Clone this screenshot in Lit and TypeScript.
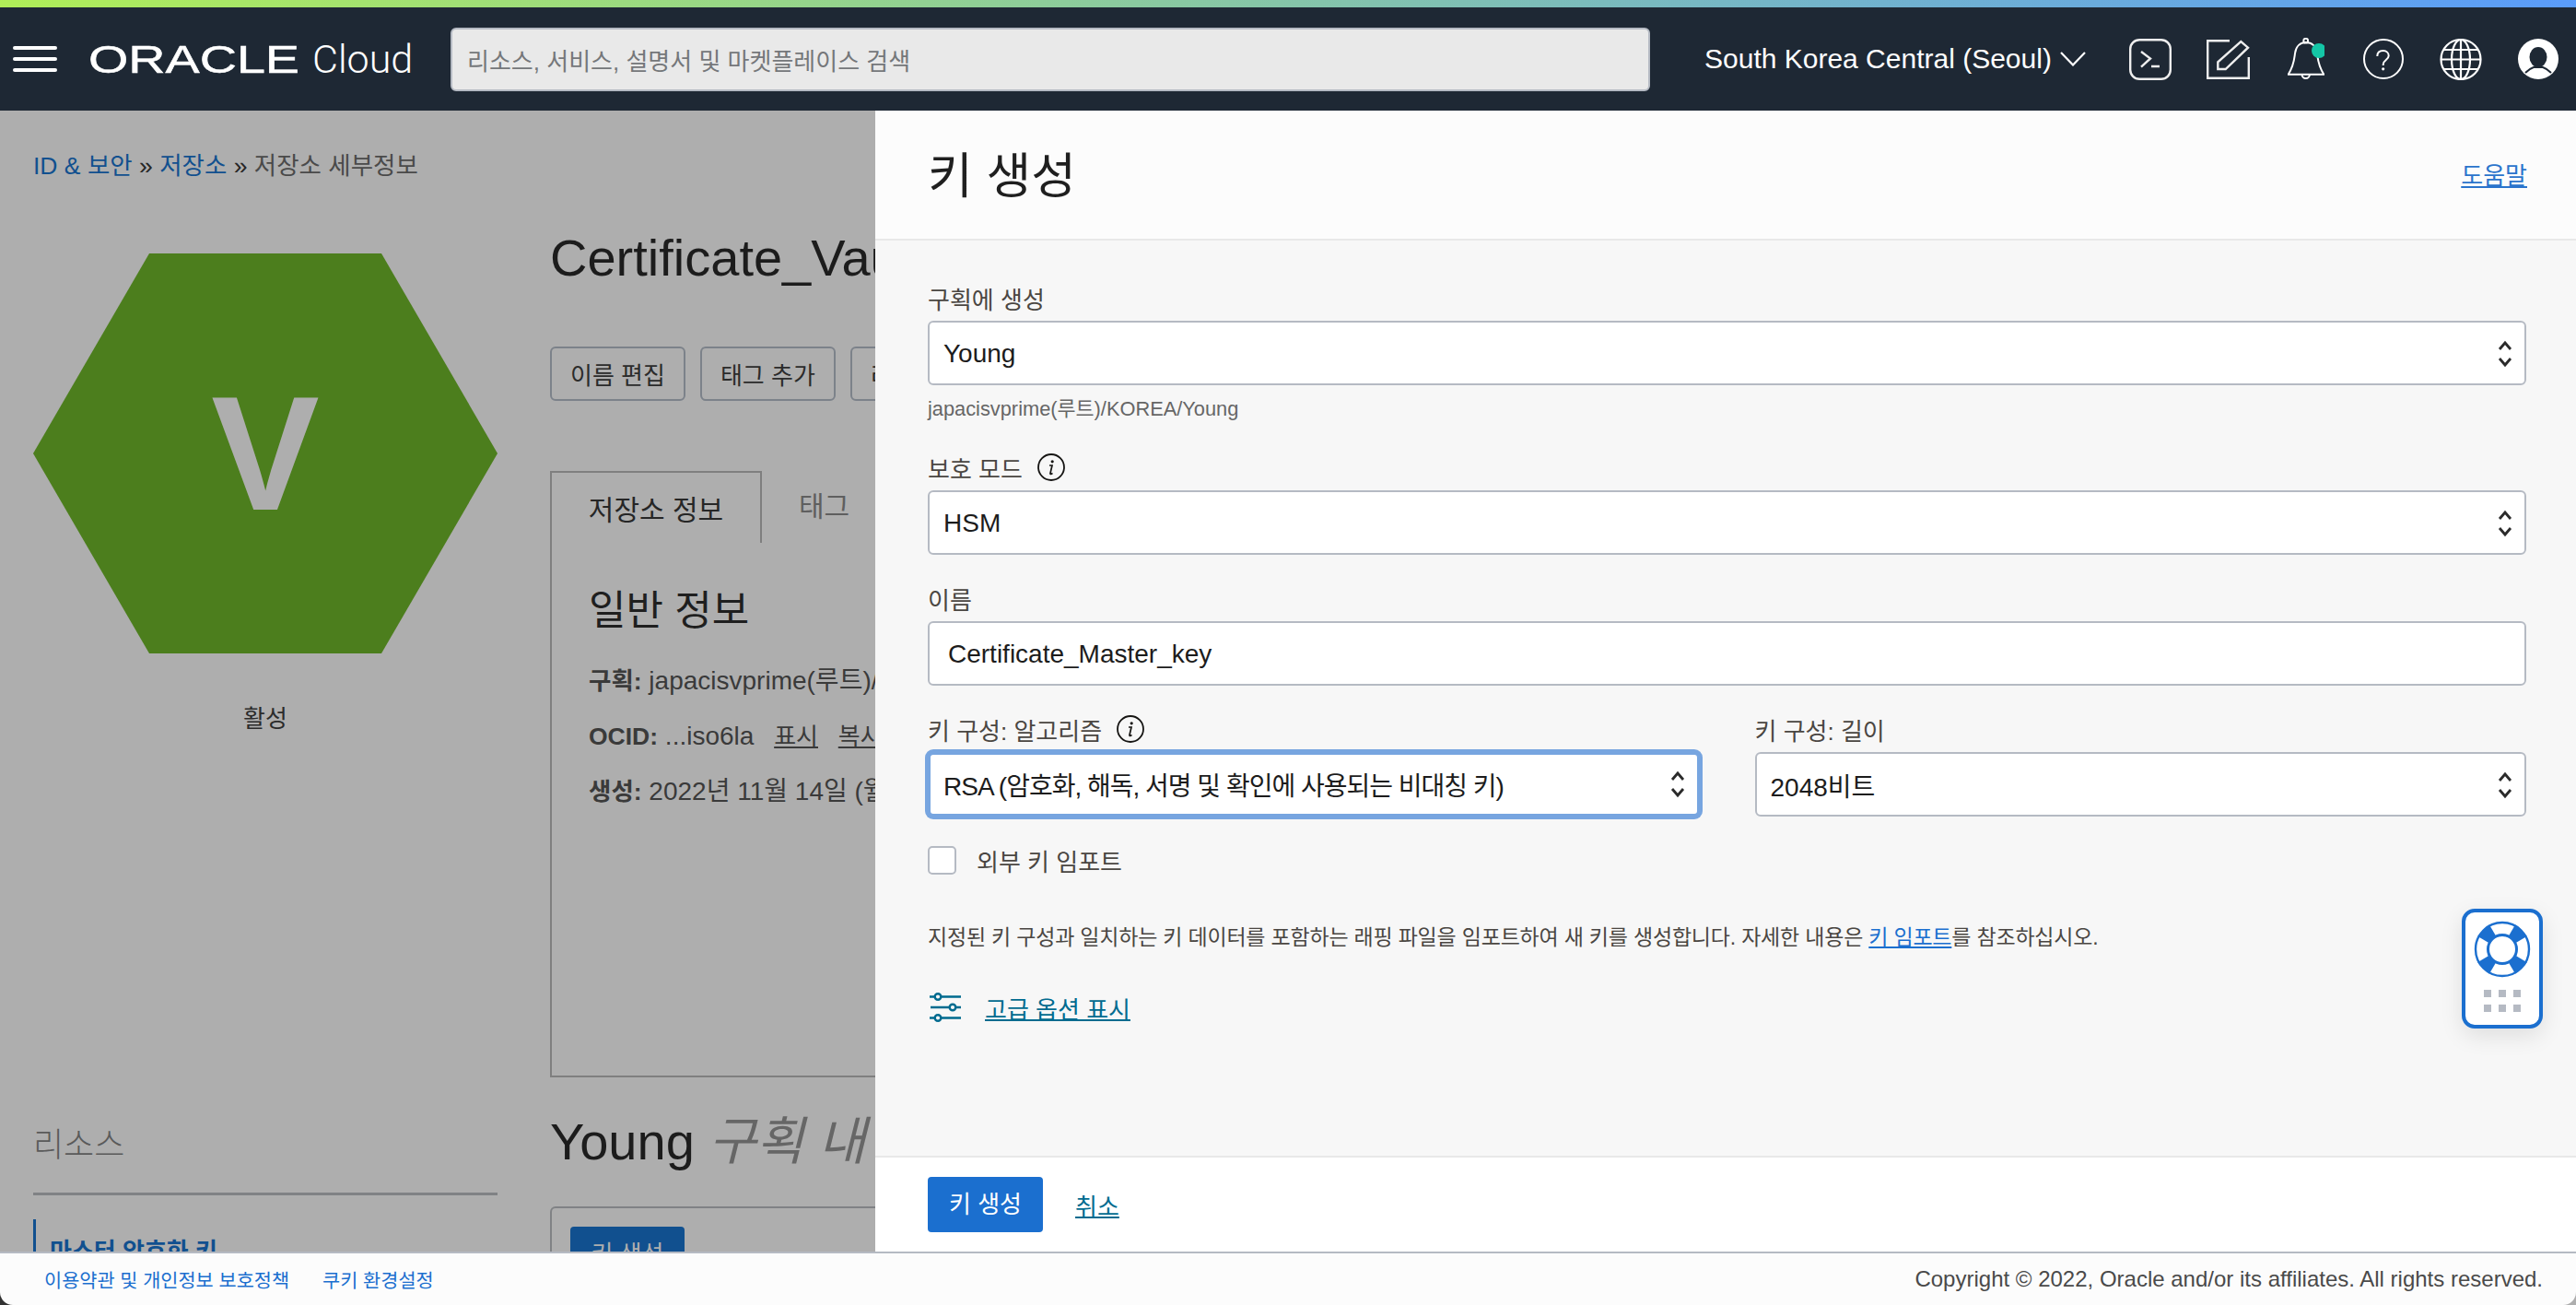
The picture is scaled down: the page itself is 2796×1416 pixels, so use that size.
import {LitElement, css, html, svg} from "lit";
import {customElement} from "lit/decorators.js";

const chevrons = html`<svg class="chev" width="16" height="34" viewBox="0 0 16 34">
  <path d="M2 12 8 5l6 7M2 22l6 7 6-7" fill="none" stroke="#2b2b2b" stroke-width="2.800"/>
</svg>`;

const info = html`<svg class="info" width="30" height="30" viewBox="0 0 30 30">
  <circle cx="15" cy="15" r="14" fill="none" stroke="#161513" stroke-width="1.8"/>
  <circle cx="16.2" cy="8.8" r="1.6" fill="#161513"/>
  <path d="M13 13h3l-2 8.5q-.2 1 .8 1l1.7-1" fill="none" stroke="#161513" stroke-width="1.7"/>
</svg>`;

const buoyWedges = [45, 135, 225, 315].map(
  (a) => svg`<polygon points="-5,-14 5,-14 9,-29 -9,-29" fill="#1b6fcf" transform="rotate(${a})"/>`
);

@customElement("app-root")
export class AppRoot extends LitElement {
  static override styles = css`
    :host {
      display: block;
      width: 2796px;
      height: 1416px;
      overflow: hidden;
      position: relative;
      background: linear-gradient(90deg, #333 20px, #aeaeae 20px);
      font-family: "Liberation Sans", "Noto Sans CJK KR", sans-serif;
      font-size: 26px;
      color: #2b2b2b;
    }
    .rainbow {
      height: 8px;
      background: linear-gradient(90deg, #b0ee58, #5a9cfa);
    }
    .topbar {
      height: 112px;
      background: #1e2834;
      display: flex;
      align-items: center;
      color: #fff;
    }
    .burger {
      margin-left: 14px;
      width: 48px;
      display: flex;
      flex-direction: column;
      gap: 8px;
    }
    .burger i {
      display: block;
      height: 4px;
      border-radius: 2px;
      background: #fff;
    }
    .logo {
      margin-left: 34px;
      width: 229px;
      height: 44px;
      display: block;
      overflow: visible;
    }
    .cloud {
      margin-left: 14px;
      font-family: Roboto, "Liberation Sans", sans-serif;
      font-size: 43px;
      font-weight: 300;
      width: 110px;
    }
    .search {
      margin-left: 40px;
      width: 1302px;
      height: 69px;
      box-sizing: border-box;
      display: flex;
      align-items: center;
      padding-left: 16px;
      background: #e9e9e9;
      border: 2px solid #b5bac3;
      border-radius: 6px;
      color: #75777a;
    }
    .region {
      margin-left: 59px;
      font-size: 30px;
      white-space: nowrap;
    }
    .region-caret {
      margin-left: 9px;
    }
    .tools {
      margin-left: 47px;
      display: flex;
      align-items: center;
      gap: 38px;
    }
    .tools svg {
      display: block;
    }
    .tools .bell {
      margin: 0 4px 0 3px;
    }
    .tools .globe,
    .tools .avatar {
      margin-left: 1px;
    }
    .page {
      height: 1238px;
      display: flex;
      overflow: hidden;
      background: #aeaeae;
    }
    .side {
      width: 504px;
      margin-left: 36px;
      flex: none;
    }
    .crumbs {
      margin-top: 45px;
      height: 30px;
      line-height: 30px;
      font-size: 26.5px;
      white-space: nowrap;
      color: #4a4a4a;
    }
    .crumbs a {
      color: #11508f;
    }
    .crumbs b {
      color: #262626;
      font-weight: 400;
    }
    .hex {
      margin-top: 80px;
      height: 434px;
      background: #4c7e1d;
      clip-path: polygon(25% 0, 75% 0, 100% 50%, 75% 100%, 25% 100%, 0 50%);
      display: flex;
      align-items: center;
      justify-content: center;
      color: #aeaeae;
      font-size: 176px;
      font-weight: 700;
    }
    .status {
      margin-top: 50px;
      text-align: center;
      color: #2b2b2b;
    }
    .res-head {
      margin-top: 425px;
      font-size: 36px;
      font-weight: 300;
      color: #5a5a5a;
      line-height: 44px;
    }
    .res-line {
      margin-top: 29px;
      height: 3px;
      background: #808285;
    }
    .res-item {
      margin-top: 26px;
      border-left: 3px solid #11508f;
      padding: 18px 0 0 15px;
      font-weight: 700;
      color: #11508f;
      white-space: nowrap;
      line-height: 34px;
      height: 60px;
    }
    .main {
      margin-left: 57px;
      flex: 1;
      min-width: 0;
    }
    h1 {
      margin: 0;
      font-size: 56px;
      font-weight: 400;
      line-height: 64px;
      white-space: nowrap;
      color: #1c1c1c;
    }
    .title {
      margin-top: 128px;
    }
    .actions {
      margin-top: 64px;
      display: flex;
      gap: 16px;
    }
    .actions span {
      box-sizing: border-box;
      height: 59px;
      padding: 0 20px;
      display: flex;
      align-items: center;
      white-space: nowrap;
      border: 2px solid #7c828a;
      border-radius: 6px;
    }
    .tabs {
      margin-top: 76px;
      height: 78px;
      display: flex;
      font-size: 30px;
    }
    .tab {
      box-sizing: border-box;
      width: 230px;
      border: 2px solid #7f7f7f;
      border-bottom: none;
      background: #aeaeae;
      position: relative;
      z-index: 1;
      display: flex;
      align-items: center;
      justify-content: center;
      color: #262626;
    }
    .tab.off {
      width: auto;
      border: none;
      padding: 0 40px;
      color: #5f5f5f;
      margin-top: -6px;
    }
    .panel {
      box-sizing: border-box;
      margin-top: -2px;
      height: 582px;
      border: 2px solid #7f7f7f;
      padding: 46px 0 0 40px;
      font-size: 28px;
      color: #3a3a3a;
      white-space: nowrap;
    }
    h2 {
      margin: 0 0 18px;
      font-size: 44px;
      font-weight: 400;
      line-height: 56px;
      color: #1f1f1f;
    }
    .row {
      height: 60px;
      line-height: 60px;
    }
    .row b {
      font-size: 26.5px;
    }
    .row u {
      margin-left: 14px;
      font-size: 26px;
    }
    .sub {
      margin-top: 38px;
    }
    .sub em {
      color: #666;
    }
    .box {
      box-sizing: border-box;
      margin-top: 38px;
      height: 60px;
      border: 2px solid #808285;
      border-bottom: none;
      border-radius: 6px 0 0 0;
      padding: 20px 0 0 20px;
    }
    .box span {
      display: block;
      width: 124px;
      height: 60px;
      text-align: center;
      line-height: 60px;
      border-radius: 4px;
      background: #11508f;
      color: #aeaeae;
    }
    .bottom {
      box-sizing: border-box;
      position: absolute;
      left: 0;
      right: 0;
      bottom: 0;
      height: 58px;
      display: flex;
      align-items: center;
      padding: 0 36px 0 48px;
      background: #fcfcfc;
      border-top: 2px solid #b5bac3;
      border-radius: 0 0 14px 14px;
      font-size: 20.8px;
      z-index: 3;
    }
    .bottom a {
      color: #1b6fcf;
      margin-right: 36px;
    }
    .bottom .copy {
      margin-left: auto;
      font-size: 24px;
      color: #4a4a4a;
    }
    .drawer {
      position: absolute;
      left: 950px;
      right: 0;
      top: 120px;
      height: 1238px;
      display: flex;
      flex-direction: column;
      background: #f7f7f7;
      z-index: 2;
    }
    .d-head {
      box-sizing: border-box;
      height: 141px;
      padding: 0 53px 2px 57px;
      display: flex;
      align-items: center;
      justify-content: space-between;
      background: #fcfcfc;
      border-bottom: 2px solid #e8e8e8;
    }
    .d-head h3 {
      margin: 0 0 4px;
      font-size: 53px;
      font-weight: 400;
      color: #1f1f1f;
    }
    .d-head a {
      color: #2a74cc;
      text-decoration: underline;
    }
    .d-body {
      flex: 1;
      padding: 47px 54px 0 57px;
    }
    .field {
      margin-bottom: 32px;
    }
    .label {
      height: 30px;
      margin-bottom: 10px;
      display: flex;
      align-items: center;
      gap: 16px;
      white-space: nowrap;
      color: #4a4642;
    }
    .control {
      box-sizing: border-box;
      height: 70px;
      display: flex;
      align-items: center;
      justify-content: space-between;
      padding: 2px 13px 0 15px;
      background: #fff;
      border: 2px solid #b5bac3;
      border-radius: 6px;
      font-size: 28px;
      color: #1c1c1c;
      white-space: nowrap;
    }
    .control.text {
      padding-left: 20px;
    }
    .control.focus {
      border: 3px solid #77a5e0;
      box-shadow: 0 0 0 3px #77a5e0;
      letter-spacing: -1px;
      padding: 0 13px 0 14px;
    }
    .hint {
      margin: 12px 0 34px;
      height: 28px;
      line-height: 28px;
      font-size: 21.8px;
      color: #666;
    }
    .hinted {
      margin-bottom: 0;
    }
    .split {
      display: grid;
      grid-template-columns: 1fr 1fr;
      gap: 60px;
    }
    .check {
      margin-top: 32px;
      height: 31px;
      display: flex;
      align-items: center;
      gap: 22px;
      color: #4a4642;
    }
    .check i {
      box-sizing: border-box;
      width: 31px;
      height: 31px;
      background: #fff;
      border: 2px solid #b5bac3;
      border-radius: 5px;
    }
    .desc {
      margin-top: 53px;
      height: 30px;
      line-height: 30px;
      font-size: 23px;
      letter-spacing: -0.2px;
      white-space: nowrap;
      color: #4a4642;
    }
    .desc a {
      color: #1b6fcf;
      text-decoration: underline;
    }
    .adv {
      margin: 45px 0 0 2px;
      height: 32px;
      display: flex;
      align-items: center;
      gap: 26px;
    }
    .adv a {
      color: #006b8f;
      text-decoration: underline;
      text-decoration-thickness: 2px;
    }
    .helper {
      position: absolute;
      left: 2672px;
      top: 986px;
      box-sizing: border-box;
      width: 88px;
      height: 130px;
      background: #fff;
      border: 4px solid #1b6fcf;
      border-radius: 14px;
      box-shadow: 0 8px 24px rgba(0, 0, 0, 0.1);
      z-index: 4;
    }
    .helper svg {
      display: block;
    }
    .d-foot {
      box-sizing: border-box;
      height: 104px;
      padding: 0 0 0 57px;
      display: flex;
      align-items: center;
      gap: 35px;
      background: #fff;
      border-top: 2px solid #e8e8e8;
    }
    .d-foot span {
      width: 125px;
      height: 60px;
      line-height: 60px;
      text-align: center;
      color: #fff;
      background: #1b6fcf;
      border-radius: 4px;
    }
    .d-foot a {
      color: #006b8f;
      text-decoration: underline;
      text-decoration-thickness: 2px;
    }
  `;

  private renderTools() {
    return html`<div class="tools">
      <svg width="46" height="45" viewBox="0 0 46 45" fill="none" stroke="#eee" stroke-width="2.4">
        <rect x="1.2" y="1.2" width="43.6" height="42.6" rx="10"/>
        <path d="M13 14l10 7.500-10 9.200M24 30h9"/>
      </svg>
      <svg width="47" height="43" viewBox="0 0 47 43" fill="none" stroke="#eee" stroke-width="2.4">
        <path d="M25 1.200H1.200v40.600h44.600V19"/>
        <path d="M12.300 32v-7.700L37.300 2 45 8.700 20.700 32z"/>
      </svg>
      <svg class="bell" width="40" height="46" viewBox="0 0 40 46" fill="none" stroke="#fff" stroke-width="2">
        <path d="M.7 39.700H39.300C33 30 33 24 32 17 31 9 26 5 20 5S9 9 8 17C7 24 7 30 .7 39.700z"/>
        <circle cx="19.700" cy="3.200" r="2.400"/>
        <path d="M15.500 39.700a4.200 4.200 0 0 0 8.400 0"/>
        <circle cx="34" cy="14" r="8" fill="#14c6a6" stroke="none"/>
      </svg>
      <svg width="44" height="44" viewBox="0 0 44 44" fill="none" stroke="#fff" stroke-width="2">
        <circle cx="22" cy="22" r="21"/>
        <path d="M15.300 19c0-4 2.800-6 6.400-6s6 2.400 6 5.600c0 4.500-6 4.500-6 9.400v1"/>
        <circle cx="21.700" cy="32.800" r="1.600" fill="#fff" stroke="none"/>
      </svg>
      <svg class="globe" width="46" height="45" viewBox="0 0 46 45" fill="none" stroke="#fff" stroke-width="2.200">
        <circle cx="23" cy="22.500" r="21.500"/>
        <ellipse cx="23" cy="22.500" rx="10" ry="21.500"/>
        <path d="M23 1v43M1.500 22.500h43M5 12h36M5 33h36"/>
      </svg>
      <svg class="avatar" width="44" height="44" viewBox="0 0 44 44">
        <circle cx="22" cy="22" r="22" fill="#fff"/>
        <ellipse cx="22" cy="20" rx="9.500" ry="11" fill="#1e2834"/>
        <path d="M8 37c3-3 6-5 9-6h10c3 1 6 3 9 6" fill="none" stroke="#1e2834" stroke-width="2"/>
      </svg>
    </div>`;
  }

  override render() {
    return html`
      <div class="rainbow"></div>
      <div class="topbar">
        <div class="burger"><i></i><i></i><i></i></div>
        <svg class="logo" viewBox="0 0 229 44">
          <text x="0" y="37" font-size="42" textLength="229" lengthAdjust="spacingAndGlyphs" fill="#fff" stroke="#fff" stroke-width="0.5">ORACLE</text>
        </svg>
        <div class="cloud">Cloud</div>
        <div class="search">리소스, 서비스, 설명서 및 마켓플레이스 검색</div>
        <div class="region">South Korea Central (Seoul)</div>
        <svg class="region-caret" width="28" height="16" viewBox="0 0 28 16">
          <path d="M1 1l13 13.500L27 1" fill="none" stroke="#fff" stroke-width="2.200"/>
        </svg>
        ${this.renderTools()}
      </div>
      <div class="page">
        <div class="side">
          <div class="crumbs"><a>ID &amp; 보안</a> <b>»</b> <a>저장소</a> <b>»</b> 저장소 세부정보</div>
          <div class="hex">V</div>
          <div class="status">활성</div>
          <div class="res-head">리소스</div>
          <div class="res-line"></div>
          <div class="res-item">마스터 암호화 키</div>
        </div>
        <div class="main">
          <h1 class="title">Certificate_Vault</h1>
          <div class="actions"><span>이름 편집</span><span>태그 추가</span><span>리소스 이동</span></div>
          <div class="tabs">
            <div class="tab">저장소 정보</div>
            <div class="tab off">태그</div>
          </div>
          <div class="panel">
            <h2>일반 정보</h2>
            <div class="row"><b>구획:</b> japacisvprime(루트)/KOREA/Young</div>
            <div class="row"><b>OCID:</b> ...iso6la <u>표시</u> <u>복사</u></div>
            <div class="row"><b>생성:</b> 2022년 11월 14일 (월)</div>
          </div>
          <h1 class="sub">Young <em>구획 내 마스터 암호화 키</em></h1>
          <div class="box"><span>키 생성</span></div>
        </div>
      </div>
      <aside class="drawer">
        <div class="d-head"><h3>키 생성</h3><a>도움말</a></div>
        <div class="d-body">
          <div class="field hinted">
            <div class="label">구획에 생성</div>
            <div class="control">Young ${chevrons}</div>
            <div class="hint">japacisvprime(루트)/KOREA/Young</div>
          </div>
          <div class="field">
            <div class="label">보호 모드 ${info}</div>
            <div class="control">HSM ${chevrons}</div>
          </div>
          <div class="field">
            <div class="label">이름</div>
            <div class="control text">Certificate_Master_key</div>
          </div>
          <div class="split">
            <div>
              <div class="label">키 구성: 알고리즘 ${info}</div>
              <div class="control focus">RSA (암호화, 해독, 서명 및 확인에 사용되는 비대칭 키) ${chevrons}</div>
            </div>
            <div>
              <div class="label">키 구성: 길이</div>
              <div class="control">2048비트 ${chevrons}</div>
            </div>
          </div>
          <div class="check"><i></i>외부 키 임포트</div>
          <div class="desc">지정된 키 구성과 일치하는 키 데이터를 포함하는 래핑 파일을 임포트하여 새 키를 생성합니다. 자세한 내용은 <a>키 임포트</a>를 참조하십시오.</div>
          <div class="adv">
            <svg width="34" height="32" viewBox="0 0 34 32" fill="none" stroke="#006b8f" stroke-width="2.400">
              <circle cx="9" cy="4.500" r="3.300"/><path d="M0 4.500h5.500M12.500 4.500H34"/>
              <circle cx="25" cy="16" r="3.300"/><path d="M1 16h20.500M28.500 16H34"/>
              <circle cx="9" cy="27.500" r="3.300"/><path d="M0 27.500h5.500M12.500 27.500H34"/>
            </svg>
            <a>고급 옵션 표시</a>
          </div>
        </div>
        <div class="d-foot"><span>키 생성</span><a>취소</a></div>
      </aside>
      <div class="helper">
        <svg width="80" height="122" viewBox="0 0 80 122">
          <g transform="translate(40 40)">
            <circle r="29" fill="none" stroke="#1b6fcf" stroke-width="2.400"/>
            ${buoyWedges}
            <circle r="15.500" fill="#fff" stroke="#1b6fcf" stroke-width="3"/>
          </g>
          <g fill="#b5bac3">
            <rect x="20" y="84" width="8" height="8"/><rect x="36" y="84" width="8" height="8"/><rect x="52" y="84" width="8" height="8"/>
            <rect x="20" y="100" width="8" height="8"/><rect x="36" y="100" width="8" height="8"/><rect x="52" y="100" width="8" height="8"/>
          </g>
        </svg>
      </div>
      <footer class="bottom">
        <a>이용약관 및 개인정보 보호정책</a><a>쿠키 환경설정</a>
        <span class="copy">Copyright © 2022, Oracle and/or its affiliates. All rights reserved.</span>
      </footer>
    `;
  }
}
